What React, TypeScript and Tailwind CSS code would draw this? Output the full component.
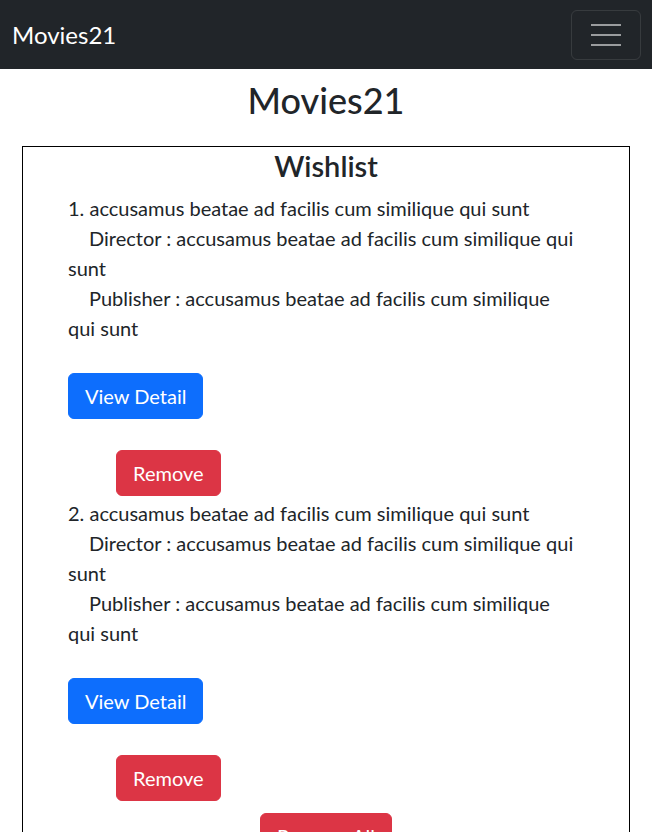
import React from "react";

const items = [1, 2];
const t = "accusamus beatae ad facilis cum similique qui sunt";

export default function App() {
  return (
    <div className="min-h-[832px] bg-white text-[#212529]" style={{ fontFamily: "Lato, 'Noto Sans', sans-serif" }}>
      <nav className="h-[69px] bg-[#212529] flex items-center justify-between pl-[12px] pr-[11px]">
        <span className="text-white text-[24px] leading-none">Movies21</span>
        <button className="w-[70px] h-[50px] border border-[rgba(255,255,255,0.1)] rounded-[6px] flex flex-col items-center justify-center gap-[8px]">
          <span className="block w-[30px] h-[2px] bg-[rgba(255,255,255,0.55)]" />
          <span className="block w-[30px] h-[2px] bg-[rgba(255,255,255,0.55)]" />
          <span className="block w-[30px] h-[2px] bg-[rgba(255,255,255,0.55)]" />
        </button>
      </nav>
      <h1 className="text-center text-[36px] font-medium leading-[1.2] mt-[10px] mb-[24px]">Movies21</h1>
      <div className="mx-[22px] border border-black pb-[40px]">
        <h2 className="text-center text-[29px] font-semibold leading-[1.2] pt-[2px]">Wishlist</h2>
        <div className="pl-[45px] pr-[52px] pt-[9px]">
          {items.map((n) => (
            <div key={n} className="text-[20px] leading-[30px]">
              <div>
                {n}. {t}
                <br />
                <span className="inline-block w-[21px]" />Director : {t}
                <br />
                <span className="inline-block w-[21px]" />Publisher : {t}
              </div>
              <div className="mt-[30px]">
                <button className="bg-[#0d6efd] text-white text-[20px] leading-[30px] px-[16px] py-[7px] rounded-[6px] border border-[#0d6efd]">View Detail</button>
              </div>
              <div className="mt-[31px] mb-[2px] pl-[48px]">
                <button className="bg-[#dc3545] text-white text-[20px] leading-[30px] px-[16px] py-[7px] rounded-[6px] border border-[#dc3545]">Remove</button>
              </div>
            </div>
          ))}
        </div>
        <div className="mt-[12px] flex justify-center">
          <button className="bg-[#dc3545] text-white text-[20px] leading-[30px] px-[16px] py-[7px] rounded-[6px] border border-[#dc3545]">Remove All</button>
        </div>
      </div>
    </div>
  );
}
